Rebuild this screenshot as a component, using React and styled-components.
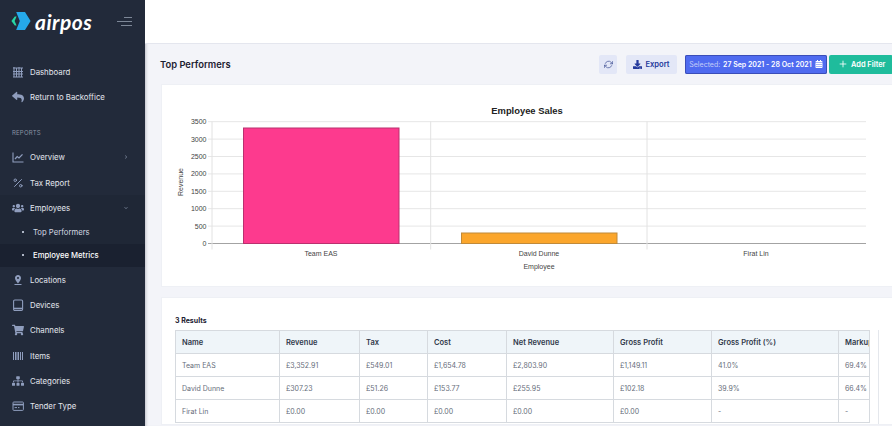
import React from 'react';
import styled, { createGlobalStyle } from 'styled-components';
import { FaReply, FaUsers, FaShoppingCart, FaSitemap, FaDownload, FaCalendarAlt, FaChevronRight, FaChevronDown } from 'react-icons/fa';
import { FiPercent, FiRefreshCw, FiPlus } from 'react-icons/fi';
import { MdPinDrop } from 'react-icons/md';

const GlobalStyle = createGlobalStyle`
  html, body { margin: 0; padding: 0; height: 100%; overflow: hidden; background: #fff; }
  body { font-family: Inter, "Liberation Sans", sans-serif; }
`;

const Page = styled.div`
  display: flex;
  width: 892px;
  height: 426px;
  overflow: hidden;
`;

const Sidebar = styled.aside`
  flex: 0 0 145px;
  height: 426px;
  background: #222a3a;
  color: #d8dde8;
  overflow: hidden;
`;

const Brand = styled.div`
  display: flex;
  align-items: center;
  height: 42px;
  padding: 0 13px 0 11px;
  box-sizing: border-box;
`;

const BrandName = styled.span`
  margin-left: 4px;
  font-family: Lato, sans-serif;
  font-size: 21px;
  font-weight: 700;
  font-style: italic;
  letter-spacing: 0.5px;
  color: #fff;
`;

const Burger = styled.div`
  margin-left: auto;
  display: flex;
  flex-direction: column;
  align-items: flex-end;
  gap: 3px;
  span { height: 1px; background: #7d8797; }
  span:nth-child(1) { width: 8px; }
  span:nth-child(2) { width: 15px; }
  span:nth-child(3) { width: 11px; }
`;

const Nav = styled.nav`
  padding-top: 17px;
`;

const NavRow = styled.div`
  display: flex;
  align-items: center;
  height: 25.3px;
  padding: 0 17px 0 12px;
  font-size: 7.8px;
  font-weight: 400;
  color: #e2e6ee;
  background: ${p => (p.$open ? '#1f2736' : 'transparent')};
  svg.main { flex: 0 0 12px; width: 12px; height: 12px; margin-right: 6px; color: #8f9dbd; }
  svg.caret { margin-left: auto; width: 4px; height: 4px; color: #6f7a8d; }
`;

const SectionLabel = styled.div`
  margin: 18px 0 0;
  height: 17px;
  padding-left: 12px;
  font-size: 6px;
  line-height: 10px;
  color: #8b93a3;
  letter-spacing: 0.2px;
`;

const SubMenu = styled.div`
  background: #1f2736;
`;

const SubRow = styled.div`
  display: flex;
  align-items: center;
  height: 23.3px;
  padding-left: 22px;
  font-size: 7.7px;
  font-weight: ${p => (p.$active ? 500 : 400)};
  color: ${p => (p.$active ? '#ffffff' : '#d3d8e2')};
  background: ${p => (p.$active ? '#1a2130' : 'transparent')};
  &::before {
    content: '';
    width: 2px;
    height: 2px;
    margin-right: 9px;
    background: #aeb6c6;
  }
`;

const Main = styled.main`
  flex: 1;
  min-width: 0;
  background: #f3f4f9;
  box-shadow: inset 3px 0 3px -2px rgba(30, 36, 50, 0.25);
`;

const TopBar = styled.div`
  height: 43px;
  background: #fff;
  border-bottom: 1px solid #e4e6ee;
`;

const SubHeader = styled.div`
  display: flex;
  align-items: center;
  height: 40px;
  padding-left: 15px;
`;

const PageTitle = styled.h1`
  margin: 0;
  font-size: 9.4px;
  font-weight: 600;
  color: #1b2030;
`;

const Actions = styled.div`
  display: flex;
  align-items: center;
  gap: 2px;
  margin-left: auto;
  margin-right: -1px;
`;

const ActionButton = styled.div`
  display: flex;
  align-items: center;
  justify-content: ${p => p.$start ? 'flex-start' : 'center'};
  gap: ${p => p.$gap || 3}px;
  height: 19px;
  width: ${p => p.$w}px;
  margin-left: ${p => p.$ml || 0}px;
  padding-left: ${p => p.$start ? 9 : 0}px;
  border-radius: 2px;
  box-sizing: border-box;
  font-size: ${p => p.$size || 7}px;
  font-weight: 600;
  white-space: nowrap;
  color: ${p => p.$color || '#fff'};
  background: ${p => p.$bg};
  box-shadow: ${p => (p.$edge ? `inset 0 0 0 1px ${p.$edge}` : 'none')};
  svg { width: ${p => p.$icon || 8}px; height: ${p => p.$icon || 8}px; }
`;

const Muted = styled.span`
  font-weight: 400;
  color: #c4cdf8;
  margin-right: 1px;
`;

const Card = styled.section`
  margin-left: 16px;
  background: #fff;
  border: 1px solid #eef0f5;
  border-right: none;
  box-sizing: border-box;
`;

const ChartCard = styled(Card)`
  height: 203px;
`;

const ChartSvg = styled.svg`
  display: block;
`;

const TableCard = styled(Card)`
  height: 128px;
  margin-top: 10px;
  padding: 17px 14px 0 13px;
  overflow: hidden;
`;

const ResultCount = styled.div`
  height: 15px;
  font-size: 7px;
  line-height: 12px;
  font-weight: 700;
  color: #1b2030;
`;

const TableWrap = styled.div`
  position: relative;
  width: 704px;
  height: 100px;
  border-right: 1px solid #e4e7ec;
  box-sizing: border-box;
`;

const Table = styled.table`
  width: 694px;
  table-layout: fixed;
  border-collapse: collapse;
  font-size: 7px;
  border: 1px solid #d6dadf;
`;

const Th = styled.th`
  height: 23px;
  padding: 0 0 0 6px;
  box-sizing: border-box;
  text-align: left;
  font-size: 7.5px;
  font-weight: 600;
  color: #30384a;
  background: #eff5f9;
  border: 1px solid #d6dadf;
  white-space: nowrap;
  overflow: hidden;
`;

const Td = styled.td`
  height: 23px;
  padding: 0 0 0 6px;
  box-sizing: border-box;
  font-weight: 400;
  color: #666d7a;
  border: 1px solid #d6dadf;
  white-space: nowrap;
  overflow: hidden;
`;

const ScrollThumb = styled.div`
  position: absolute;
  left: 3px;
  top: 93.5px;
  width: 625px;
  height: 2px;
  background: #b5b8bd;
`;

const columns = [
  ['Name', 104], ['Revenue', 80], ['Tax', 68], ['Cost', 79],
  ['Net Revenue', 107], ['Gross Profit', 98], ['Gross Profit (%)', 127], ['Markup', 31],
];

const rows = [
  ['Team EAS', '£3,352.91', '£549.01', '£1,654.78', '£2,803.90', '£1,149.11', '41.0%', '69.4%'],
  ['David Dunne', '£307.23', '£51.26', '£153.77', '£255.95', '£102.18', '39.9%', '66.4%'],
  ['Firat Lin', '£0.00', '£0.00', '£0.00', '£0.00', '£0.00', '-', '-'],
];

const LogoMark = () => (
  <svg width="20" height="20" viewBox="0 0 20 20">
    <path d="M3.8 5.5 L0.4 10 L3.8 14.5 L5.6 14.5 L3.6 10 L5.6 5.5 Z" fill="#27d6a5" />
    <path d="M5.2 1 H14 L19.6 10 L14 19 H5.2 L8.8 10 Z" fill="#25a9ea" />
  </svg>
);

const Svg = ({ children }) => (
  <svg className="main" viewBox="0 0 12 12">{children}</svg>
);

const DashboardIcon = () => (
  <Svg>
    <path d="M1 2h10M1 5.5h10M1 8h10M1 11h10M2 1v10M4.5 2v9M7 1v10M9.5 2v9" stroke="currentColor" strokeWidth="1" fill="none" />
  </Svg>
);

const OverviewIcon = () => (
  <Svg>
    <path d="M1 1.5V11H11.5" stroke="currentColor" strokeWidth="1.1" fill="none" />
    <path d="M3 8 L5.2 5.6 L7 7 L10.5 3.4" stroke="currentColor" strokeWidth="1.3" fill="none" />
  </Svg>
);

const TabletIcon = () => (
  <Svg>
    <rect x="1.6" y="1" width="9" height="10.4" rx="1.2" fill="none" stroke="currentColor" strokeWidth="1.1" />
    <path d="M2 9.4h8" stroke="currentColor" strokeWidth="1.4" />
  </Svg>
);

const ItemsIcon = () => (
  <Svg>
    <path d="M1.5 2v8M3.5 2v8M5 2v8M6.5 2v8M8.5 2v8M10.5 2v8" stroke="currentColor" strokeWidth="1" />
  </Svg>
);

const TenderIcon = () => (
  <Svg>
    <rect x="1" y="2" width="10.4" height="8.4" rx="0.8" fill="none" stroke="currentColor" strokeWidth="1" />
    <path d="M1 4.6h10.4" stroke="currentColor" strokeWidth="1.6" />
    <path d="M2.6 7.6h2.4M6 7.6h1.4" stroke="currentColor" strokeWidth="1" />
  </Svg>
);

const ChartAxisText = styled.text`
  font-family: "Liberation Sans", Arial, sans-serif;
  font-size: 7px;
  fill: #444;
`;

const ChartTitle = styled.text`
  font-family: "Liberation Sans", Arial, sans-serif;
  font-size: 9.4px;
  font-weight: 700;
  fill: #222;
`;

// chart drawn in page coordinates, shifted to the card origin
const EmployeeChart = () => {
  const ox = 162;
  const oy = 86;
  const ticks = [0, 500, 1000, 1500, 2000, 2500, 3000, 3500];
  const base = 244.5 - oy;
  const stepY = 17.4;
  const gridX = [212, 430.7, 647];
  return (
    <ChartSvg width="730" height="201">
      {ticks.map((t, i) => {
        const y = base - i * stepY;
        return (
          <g key={t}>
            <line x1={208 - ox} x2={866 - ox} y1={y} y2={y} stroke={i === 0 ? '#a3a3a3' : '#e6e6e6'} />
            <ChartAxisText x={206.5 - ox} y={y + 2.5} textAnchor="end">{t}</ChartAxisText>
          </g>
        );
      })}
      {gridX.map(x => (
        <line key={x} x1={x - ox} x2={x - ox} y1={122.5 - oy} y2={250.5 - oy} stroke="#e2e2e2" />
      ))}
      <rect x={243.5 - ox} y={129 - oy} width={155.5} height={115.5} fill="#fd3a8e" stroke="#b9306f" />
      <rect x={461.5 - ox} y={234 - oy} width={155.5} height={10.5} fill="#fba62c" stroke="#c08a3a" />
      <ChartTitle x={527 - ox} y={114.5 - oy} textAnchor="middle">Employee Sales</ChartTitle>
      <ChartAxisText x={321 - ox} y={256.5 - oy} textAnchor="middle">Team EAS</ChartAxisText>
      <ChartAxisText x={539 - ox} y={256.5 - oy} textAnchor="middle">David Dunne</ChartAxisText>
      <ChartAxisText x={756 - ox} y={256.5 - oy} textAnchor="middle">Firat Lin</ChartAxisText>
      <ChartAxisText x={539 - ox} y={270 - oy} textAnchor="middle">Employee</ChartAxisText>
      <ChartAxisText transform={`translate(${183 - ox} ${183 - oy}) rotate(-90)`} textAnchor="middle">Revenue</ChartAxisText>
    </ChartSvg>
  );
};

const App = () => (
  <Page>
    <GlobalStyle />
    <Sidebar>
      <Brand>
        <LogoMark />
        <BrandName>airpos</BrandName>
        <Burger><span /><span /><span /></Burger>
      </Brand>
      <Nav>
        <NavRow><DashboardIcon />Dashboard</NavRow>
        <NavRow><FaReply className="main" />Return to Backoffice</NavRow>
        <SectionLabel>REPORTS</SectionLabel>
        <NavRow><OverviewIcon />Overview<FaChevronRight className="caret" /></NavRow>
        <NavRow><FiPercent className="main" />Tax Report</NavRow>
        <NavRow $open><FaUsers className="main" />Employees<FaChevronDown className="caret" /></NavRow>
        <SubMenu>
          <SubRow>Top Performers</SubRow>
          <SubRow $active>Employee Metrics</SubRow>
        </SubMenu>
        <NavRow><MdPinDrop className="main" />Locations</NavRow>
        <NavRow><TabletIcon />Devices</NavRow>
        <NavRow><FaShoppingCart className="main" />Channels</NavRow>
        <NavRow><ItemsIcon />Items</NavRow>
        <NavRow><FaSitemap className="main" />Categories</NavRow>
        <NavRow><TenderIcon />Tender Type</NavRow>
      </Nav>
    </Sidebar>
    <Main>
      <TopBar />
      <SubHeader>
        <PageTitle>Top Performers</PageTitle>
        <Actions>
          <ActionButton $w={18} $bg="#e3e7f7" $color="#4a5a9a" $icon={9}><FiRefreshCw /></ActionButton>
          <ActionButton $w={51} $ml={7} $bg="#e3e7f7" $color="#24399c" $size={7.6} $icon={9}><FaDownload />Export</ActionButton>
          <ActionButton $w={142} $ml={6} $bg="#4f6bf0" $edge="#3a4db8"><span><Muted>Selected:</Muted> 27 Sep 2021 - 28 Oct 2021</span><FaCalendarAlt /></ActionButton>
          <ActionButton $w={64} $bg="#1fbc9c" $start $gap={3} $size={7.4} $icon={10}><FiPlus />Add Filter</ActionButton>
        </Actions>
      </SubHeader>
      <ChartCard><EmployeeChart /></ChartCard>
      <TableCard>
        <ResultCount>3 Results</ResultCount>
        <TableWrap>
          <Table>
            <colgroup>
              {columns.map(([name, w]) => <col key={name} style={{ width: w }} />)}
            </colgroup>
            <thead>
              <tr>{columns.map(([name]) => <Th key={name}>{name}</Th>)}</tr>
            </thead>
            <tbody>
              {rows.map(row => (
                <tr key={row[0]}>{row.map((cell, i) => <Td key={i}>{cell}</Td>)}</tr>
              ))}
            </tbody>
          </Table>
          <ScrollThumb />
        </TableWrap>
      </TableCard>
    </Main>
  </Page>
);

export default App;
